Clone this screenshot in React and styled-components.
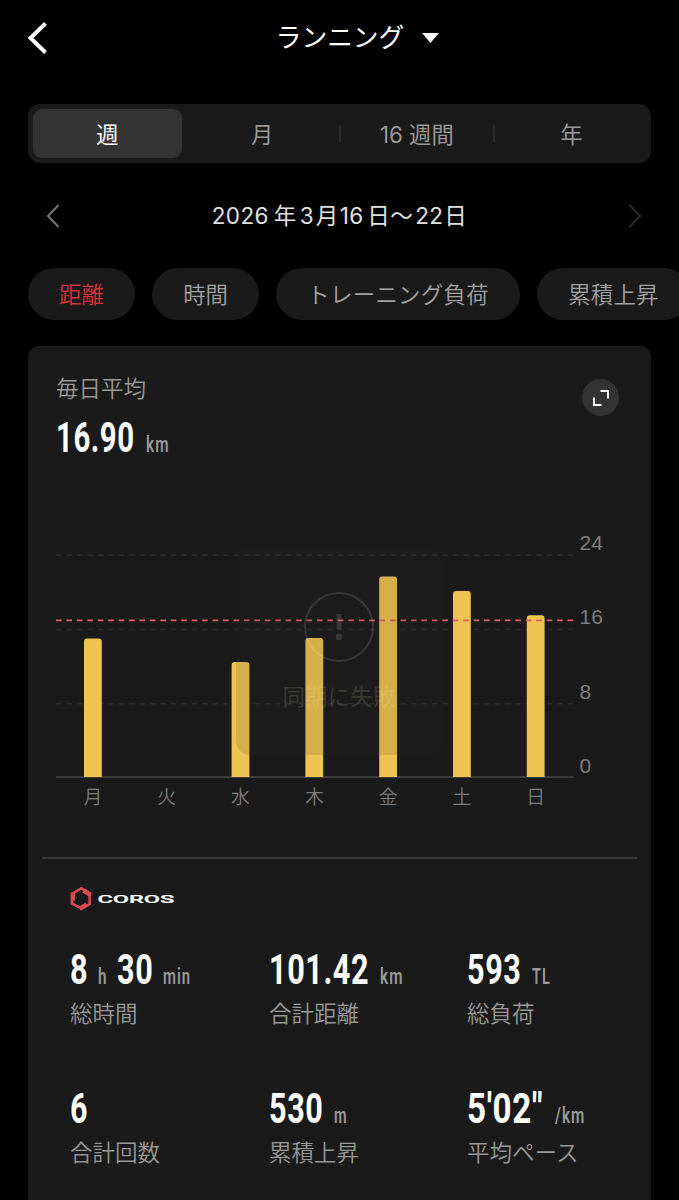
import React from "react";
import styled, { createGlobalStyle } from "styled-components";

const GlobalStyle = createGlobalStyle`
  * { box-sizing: border-box; }
  html, body { margin: 0; background: #000; overflow: hidden; }
  body { font-family: Inter, "Noto Sans CJK JP", sans-serif; color: #fff; }
  button { font: inherit; color: inherit; border: 0; padding: 0; background: none; }
  svg { display: block; }
`;

const Screen = styled.main`
  width: 679px;
  height: 1200px;
  overflow: hidden;
  background: #000;
  display: flex;
  flex-direction: column;
`;

const Header = styled.header`
  height: 75px;
  flex: none;
  display: grid;
  grid-template-columns: 80px 1fr 80px;
  align-items: center;
`;

const BackButton = styled.button`
  padding-left: 27px;
`;

const Title = styled.div`
  display: flex;
  align-items: center;
  justify-content: center;
  gap: 18px;
  padding: 1px 0 0 36px;
  font-size: 25.7px;
  line-height: 36px;
`;

const Segments = styled.nav`
  flex: none;
  margin: 29px 28px 0;
  height: 59px;
  padding: 5px;
  border-radius: 12px;
  background: #1a1a1a;
  display: grid;
  grid-template-columns: repeat(4, 1fr);
  column-gap: 5.6px;
`;

const Segment = styled.button`
  position: relative;
  border-radius: 9px;
  background: ${(p) => (p.$active ? "#333" : "transparent")};
  color: ${(p) => (p.$active ? "#fff" : "#999")};
  font-size: 22.3px;
  line-height: 51px;
  height: 49px;
  &::after {
    content: "";
    display: ${(p) => (p.$divided ? "block" : "none")};
    position: absolute;
    right: -4px;
    top: 16px;
    width: 2px;
    height: 17px;
    background: #2c2c2c;
  }
`;

const DateRow = styled.div`
  flex: none;
  height: 105px;
  padding: 0 37px 0 46px;
  display: flex;
  align-items: center;
  justify-content: space-between;
`;

const DateText = styled.div`
  display: flex;
  margin: 0 9px 0 0;
  font-size: 22.5px;
  line-height: 32px;
  color: #e0e0e0;
  letter-spacing: 0.4px;
`;

const DatePart = styled.span`
  width: ${(p) => p.$w}px;
  white-space: nowrap;
`;

const Chips = styled.div`
  flex: none;
  display: flex;
  gap: 17.4px;
  padding-left: 28px;
  height: 52px;
`;

const Chip = styled.button`
  flex: none;
  padding: 0 31px;
  border-radius: 26px;
  background: #1a1a1a;
  color: ${(p) => (p.$active ? "#d9303b" : "#a2a2a2")};
  font-size: 22.4px;
  font-weight: 350;
  letter-spacing: ${(p) => p.$spacing || 0}px;
  line-height: 51px;
`;

const Card = styled.section`
  flex: none;
  margin: 26px 28px 0;
  height: 900px;
  border-radius: 11px;
  background: #1a1a1a;
`;

const CardHead = styled.div`
  display: flex;
  justify-content: space-between;
  padding: 27px 32px 0 28px;
  height: 154px;
`;

const Label = styled.div`
  font-size: 22.5px;
  font-weight: 350;
  line-height: 32px;
  color: #989898;
`;

const ExpandButton = styled.button`
  width: 37px;
  height: 37px;
  margin-top: 6px;
  border-radius: 50%;
  background: #333;
  display: grid;
  place-items: center;
`;

const Reading = styled.div`
  display: flex;
  align-items: baseline;
  height: 44px;
  line-height: 44px;
  margin-top: ${(p) => p.$top || 0}px;
  font-family: Roboto, sans-serif;
`;

const Part = styled.span`
  flex: none;
  width: ${(p) => p.$w}px;
  white-space: pre;
  transform-origin: 0 50%;
  transform: scaleX(${(p) => p.$scale || (p.$unit ? 0.68 : 0.72)});
  font-size: ${(p) => (p.$unit ? 22.5 : 42.5)}px;
  font-weight: ${(p) => (p.$unit ? 600 : 700)};
  color: ${(p) => (p.$unit ? "#999" : "#fff")};
  letter-spacing: ${(p) => (p.$unit ? 1.6 : 0.8)}px;
`;

const ChartArea = styled.div`
  position: relative;
  height: 357px;
`;

const Toast = styled.div`
  position: absolute;
  left: 208px;
  top: 49px;
  width: 207px;
  height: 206px;
  border-radius: 14px;
  background: rgba(48, 48, 48, 0.13);
  display: flex;
  flex-direction: column;
  align-items: center;
  padding: 42.5px 1px 0 0;
  gap: 19.5px;
  font-size: 22.6px;
  line-height: 32px;
  color: rgba(255, 248, 190, 0.15);
`;

const Divider = styled.hr`
  margin: 0 14px;
  border: 0;
  height: 2px;
  background: #3b3b3b;
`;

const Brand = styled.div`
  display: flex;
  align-items: center;
  gap: 4px;
  padding: 26px 0 0 41px;
  height: 53px;
`;

const Stats = styled.div`
  display: grid;
  grid-template-columns: 199px 198px 1fr;
  grid-auto-rows: 139px;
  padding: 36px 0 0 42px;
`;

const Stat = styled.div`
  display: flex;
  flex-direction: column;
  gap: 6px;
`;

const Chevron = ({ w, h, d, color, stroke }) => (
  <svg width={w} height={h} fill="none" stroke={color} strokeWidth={stroke}>
    <path d={d} />
  </svg>
);

const Value = ({ parts, top }) => (
  <Reading $top={top}>
    {parts.map(([text, width, unit, scale], i) => (
      <Part key={i} $w={width} $unit={unit} $scale={scale}>{text}</Part>
    ))}
  </Reading>
);

const days = [
  ["月", 638.5], ["火", null], ["水", 662], ["木", 638],
  ["金", 576.5], ["土", 591], ["日", 615.3],
];

const TOP = 500;

const Chart = () => (
  <svg width="623" height="356" fontFamily='"Liberation Sans", "Noto Sans CJK JP", sans-serif'>
    {[555.3, 629.5, 703.7].map((y) => (
      <path key={y} d={`M28 ${y - TOP}H545.5`} stroke="#2b2b2b" strokeWidth="1.4" strokeDasharray="5.6 4.84" />
    ))}
    <path d="M28 277H545.5" stroke="#484848" strokeWidth="1.6" />
    {days.map(([day, top], i) => {
      const x = 56 + i * 73.8;
      const y = top - TOP;
      return (
        <g key={day}>
          {top && (
            <path d={`M${x} 277V${y + 3}q0-3 3-3h11.8q3 0 3 3V277z`} fill="#efc351" />
          )}
          <text x={x + 8.9} y="304" fontSize="18.8" fontWeight="350" fill="#7c7c7c" textAnchor="middle">{day}</text>
        </g>
      );
    })}
    <path d="M28 120.4H545.5" stroke="#df5e62" strokeWidth="1.8" strokeDasharray="5.6 4.84" />
    {[[24, 50], [16, 124.3], [8, 198.6], [0, 272.8]].map(([n, y]) => (
      <text key={n} x="551.5" y={y} fontSize="21" fill="#7c7c7c">{n}</text>
    ))}
  </svg>
);

const stats = [
  ["総時間", [["8", 28], ["h", 19, true], ["30", 46], ["min", 30, true, 0.66]]],
  ["合計距離", [["101.42", 110.5], ["km", 30, true]]],
  ["総負荷", [["593", 65], ["TL", 30, true, 0.64]]],
  ["合計回数", [["6", 27]]],
  ["累積上昇", [["530", 64.5], ["m", 30, true, 0.64]]],
  ["平均ペース", [["5'02\"", 87.5, false, 0.78], ["/km", 30, true, 0.68]]],
];

export default function App() {
  return (
    <Screen>
      <GlobalStyle />
      <Header>
        <BackButton>
          <Chevron w={21} h={32} d="M18.5 1.5L3.5 16L18.5 30.5" color="#fff" stroke={4} />
        </BackButton>
        <Title>
          ランニング
          <svg width="17" height="10"><path d="M0 0H17L8.5 10z" fill="#fff" /></svg>
        </Title>
      </Header>
      <Segments>
        <Segment $active>週</Segment>
        <Segment $divided>月</Segment>
        <Segment $divided>16 週間</Segment>
        <Segment>年</Segment>
      </Segments>
      <DateRow>
        <Chevron w={14} h={24} d="M12.5 1L2 12L12.5 23" color="#777" stroke={2} />
        <DateText>
          <DatePart $w={62}>2026</DatePart>
          <DatePart $w={26}>年</DatePart>
          <DatePart $w={16}>3</DatePart>
          <DatePart $w={24}>月</DatePart>
          <DatePart $w={27.5}>16</DatePart>
          <DatePart $w={48}>日〜</DatePart>
          <DatePart $w={29}>22</DatePart>
          <DatePart $w={23}>日</DatePart>
        </DateText>
        <Chevron w={14} h={24} d="M1.5 1L12 12L1.5 23" color="#2b2b2b" stroke={2} />
      </DateRow>
      <Chips>
        <Chip $active>距離</Chip>
        <Chip>時間</Chip>
        <Chip $spacing={0.3}>トレーニング負荷</Chip>
        <Chip $spacing={0.2}>累積上昇</Chip>
      </Chips>
      <Card>
        <CardHead>
          <div>
            <Label>毎日平均</Label>
            <Value top={10.5} parts={[["16.90", 89.5, false, 0.69], ["km", 30, true]]} />
          </div>
          <ExpandButton>
            <svg width="18" height="18" fill="none" stroke="#fff" strokeWidth="2">
              <path d="M8.5 2H16V9.5M2 8.5V16H9.5" />
            </svg>
          </ExpandButton>
        </CardHead>
        <ChartArea>
          <Chart />
          <Toast>
            <svg width="70" height="70" fill="none" stroke="rgba(255,255,255,.12)" strokeWidth="2">
              <circle cx="35" cy="35" r="34" />
              <path d="M35 22V37.5" strokeWidth="5" />
              <circle cx="35" cy="45" r="3.2" fill="rgba(255,255,255,.12)" stroke="none" />
            </svg>
            同期に失敗
          </Toast>
        </ChartArea>
        <Divider />
        <Brand>
          <svg width="24" height="25" viewBox="0 0 24 25" fill="none" stroke="#df4a50" strokeWidth="2.5">
            {[0, 120, 240].map((angle) => (
              <path key={angle} d="M4.9 14.5V6.8L12.4 2.3L22 7.8" transform={`rotate(${angle} 12 12.6)`} />
            ))}
          </svg>
          <svg width="80" height="12">
            <text x="0.4" y="9.8" fontFamily="Roboto, sans-serif" fontSize="10.4" fontWeight="500" fill="#fff" stroke="#fff" strokeWidth="0.2" textLength="77" lengthAdjust="spacingAndGlyphs">COROS</text>
          </svg>
        </Brand>
        <Stats>
          {stats.map(([label, parts]) => (
            <Stat key={label}>
              <Value parts={parts} />
              <Label>{label}</Label>
            </Stat>
          ))}
        </Stats>
      </Card>
    </Screen>
  );
}
